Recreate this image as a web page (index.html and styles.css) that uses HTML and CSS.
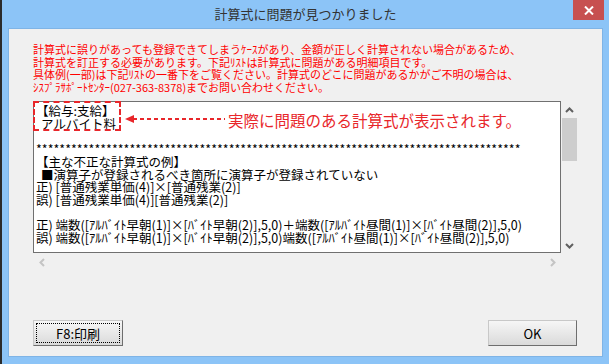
FILE: index.html
```html
<!DOCTYPE html>
<html lang="ja">
<head>
    <meta charset="UTF-8">
    <title>計算式に問題が見つかりました</title>
    <link rel="stylesheet" href="styles.css">
</head>
<body>
    <div class="window">
        <div class="titlebar">
            <span></span>
            <span class="title">計算式に問題が見つかりました</span>
            <div class="close">
                <svg width="10" height="9" viewBox="0 0 10 9"><path d="M1 0.5 L9 8.5 M9 0.5 L1 8.5" stroke="#fff" stroke-width="2"/></svg>
            </div>
        </div>

        <div class="client">
            <div class="notice">
                <div>計算式に誤りがあっても登録できてしまうｹｰｽがあり、金額が正しく計算されない場合があるため、</div>
                <div>計算式を訂正する必要があります。下記ﾘｽﾄは計算式に問題がある明細項目です。</div>
                <div>具体例(一部)は下記ﾘｽﾄの一番下をご覧ください。計算式のどこに問題があるかがご不明の場合は、</div>
                <div>ｼｽﾌﾟﾗｻﾎﾟｰﾄｾﾝﾀｰ(027-363-8378)までお問い合わせください。</div>
            </div>

            <div class="listbox">
                <div class="list-row">
                    <div class="list-text">
                        <div>【給与:支給】</div>
                        <div class="indent">アルバイト料</div>
                        <div>&nbsp;</div>
                        <div>***********************************************************************************</div>
                        <div>【主な不正な計算式の例】</div>
                        <div class="indent">■演算子が登録されるべき箇所に演算子が登録されていない</div>
                        <div>正) [普通残業単価(4)]×[普通残業(2)]</div>
                        <div>誤) [普通残業単価(4)][普通残業(2)]</div>
                        <div>&nbsp;</div>
                        <div>正) 端数([ｱﾙﾊﾞｲﾄ早朝(1)]×[ﾊﾞｲﾄ早朝(2)],5,0)＋端数([ｱﾙﾊﾞｲﾄ昼間(1)]×[ﾊﾞｲﾄ昼間(2)],5,0)</div>
                        <div>誤) 端数([ｱﾙﾊﾞｲﾄ早朝(1)]×[ﾊﾞｲﾄ早朝(2)],5,0)端数([ｱﾙﾊﾞｲﾄ昼間(1)]×[ﾊﾞｲﾄ昼間(2)],5,0)</div>
                    </div>
                    <div class="vscroll">
                        <svg width="9" height="6" viewBox="0 0 9 6"><path d="M1 5 L4.5 1.5 L8 5" fill="none" stroke="#606060" stroke-width="2"/></svg>
                        <div class="thumb"></div>
                        <span class="grow"></span>
                        <svg width="9" height="6" viewBox="0 0 9 6"><path d="M1 1 L4.5 4.5 L8 1" fill="none" stroke="#606060" stroke-width="2"/></svg>
                    </div>
                </div>
                <div class="hscroll">
                    <svg width="6" height="9" viewBox="0 0 6 9"><path d="M5 1 L1.5 4.5 L5 8" fill="none" stroke="#c4c4c4" stroke-width="2"/></svg>
                    <svg width="6" height="9" viewBox="0 0 6 9"><path d="M1 1 L4.5 4.5 L1 8" fill="none" stroke="#c4c4c4" stroke-width="2"/></svg>
                </div>

                <!-- 注釈 -->
                <div class="mark"></div>
                <svg class="arrow" width="100" height="10" viewBox="0 0 100 10">
                    <path d="M8 5 L100 5" stroke="#e8262a" stroke-width="2" stroke-dasharray="4 3"/>
                    <path d="M0 5 L9 1 L9 9 Z" fill="#e8262a"/>
                </svg>
                <div class="callout">実際に問題のある計算式が表示されます。</div>
            </div>

            <div class="buttons">
                <button class="btn"><span class="focus">F8:印刷</span></button>
                <button class="btn">OK</button>
            </div>
        </div>
    </div>
</body>
</html>
```

FILE: styles.css
```css
body {
    margin: 0;
    background-color: #2b2b2b;
    font-family: "Noto Sans CJK JP", "Liberation Sans", sans-serif;
}

.window {
    width: 607px;
    height: 364px;
    margin-left: 2px;
    background-color: #8cc4f7;
    display: flex;
    flex-direction: column;
}

.titlebar {
    height: 28px;
    display: grid;
    grid-template-columns: 1fr auto 1fr;
    align-items: start;
}

.title {
    font-size: 13px;
    line-height: 28px;
    color: #333;
}

.close {
    justify-self: end;
    margin-right: 5px;
    width: 31px;
    height: 20px;
    background-color: #c75050;
    display: flex;
    align-items: center;
    justify-content: center;
}

.client {
    flex: 1;
    margin: 0 6px 7px 6px;
    background-color: #f0f0f0;
    border: 1px solid #7fb4e6;
    padding: 14px 0 0 24px;
    display: flex;
    flex-direction: column;
}

.notice {
    color: #ff0000;
    font-size: 11px;
    line-height: 12.7px;
    height: 58px;
    white-space: nowrap;
}

.listbox {
    position: relative;
    width: 545px;
}

.list-row {
    display: flex;
}

.list-text {
    background-color: #fff;
    border: 1px solid #707070;
    padding: 3px 0 0 2px;
    box-sizing: border-box;
    width: 528px;
    height: 152px;
    font-size: 12.5px;
    line-height: 12.7px;
    color: #000;
    white-space: nowrap;
    overflow: hidden;
}

.indent {
    padding-left: 5px;
}

.vscroll {
    width: 17px;
    display: flex;
    flex-direction: column;
    align-items: center;
    padding: 6px 0 4px;
    box-sizing: border-box;
}

.thumb {
    width: 15px;
    height: 43px;
    margin-top: 5px;
    background-color: #cdcdcd;
}

.grow {
    flex: 1;
}

.hscroll {
    width: 528px;
    height: 18px;
    display: flex;
    justify-content: space-between;
    align-items: center;
    padding: 0 5px 0 6px;
    box-sizing: border-box;
}

.mark {
    position: absolute;
    left: 0;
    top: 0;
    width: 88px;
    height: 30px;
    border: 2px dashed #e8262a;
    box-sizing: border-box;
}

.arrow {
    position: absolute;
    left: 92px;
    top: 13px;
}

.callout {
    position: absolute;
    left: 195px;
    top: 9px;
    font-size: 15.5px;
    line-height: 20px;
    color: #e8262a;
    white-space: nowrap;
}

.buttons {
    display: flex;
    justify-content: space-between;
    width: 544px;
    margin-top: 49px;
}

.btn {
    width: 90px;
    height: 26px;
    padding: 2px;
    font-family: inherit;
    font-size: 13px;
    color: #000;
    border: 1px solid;
    border-color: #c8c8c8 #6e6e6e #6e6e6e #c8c8c8;
    background: linear-gradient(#f6f6f6, #dadada);
    display: flex;
}

.btn:last-child {
    width: 89px;
    justify-content: center;
    align-items: center;
}

.focus {
    flex: 1;
    border: 1px dotted #000;
    display: flex;
    align-items: center;
    justify-content: center;
}
```
